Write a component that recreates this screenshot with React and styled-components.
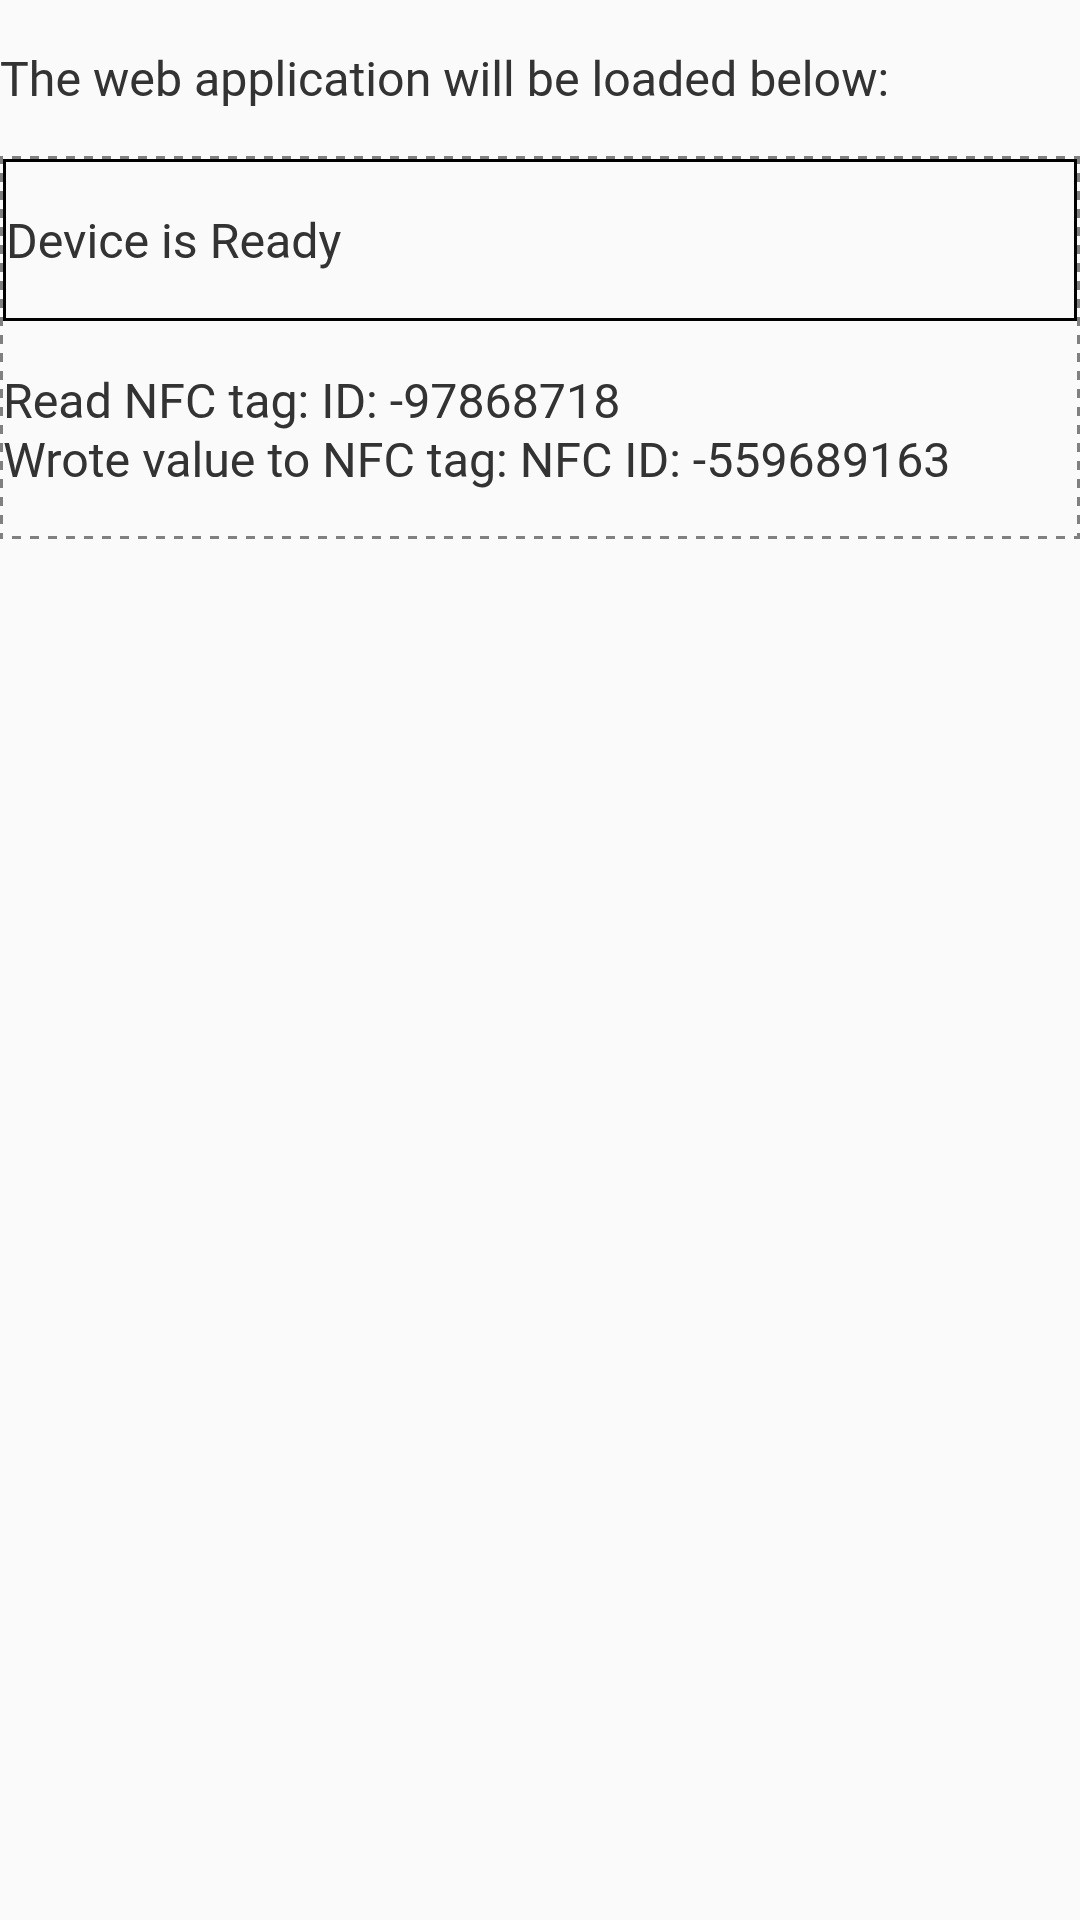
import React from 'react';
import styled, { createGlobalStyle } from 'styled-components';

const GlobalStyle = createGlobalStyle`
  html, body {
    margin: 0;
    padding: 0;
    background: #fafafa;
  }
  body {
    font-family: Roboto, "Noto Sans", sans-serif;
    color: #333333;
    font-size: 48.3px;
    line-height: 59px;
  }
`;

const dash = '#808080';

// dashed frame drawn with gradients so the dashes are 9px long like the webview's
const AppFrame = styled.div`
  padding: 3px;
  background:
    repeating-linear-gradient(90deg, ${dash} 0 3px, transparent 3px 12px, ${dash} 12px 18px) top left / 100% 3px no-repeat,
    repeating-linear-gradient(90deg, ${dash} 0 3px, transparent 3px 12px, ${dash} 12px 18px) bottom left / 100% 3px no-repeat,
    repeating-linear-gradient(180deg, ${dash} 0 8px, transparent 8px 17px, ${dash} 17px 18px) top left / 3px 100% no-repeat,
    repeating-linear-gradient(180deg, ${dash} 0 8px, transparent 8px 17px, ${dash} 17px 18px) top right / 3px 100% no-repeat;
`;

const Intro = styled.p`
  margin: 50px 0 47px;
`;

const StatusBox = styled.div`
  border: 3px solid #000000;
  padding: 50px 0 47px;
`;

const Log = styled.div`
  padding: 51px 0 46px;
`;

const LogLine = styled.div`
  white-space: nowrap;
`;

export default function App() {
  const messages = [
    'Read NFC tag: ID: -97868718',
    'Wrote value to NFC tag: NFC ID: -559689163',
  ];

  return (
    <>
      <GlobalStyle />
      <Intro>The web application will be loaded below:</Intro>
      <AppFrame>
        <StatusBox>Device is Ready</StatusBox>
        <Log>
          {messages.map((m) => (
            <LogLine key={m}>{m}</LogLine>
          ))}
        </Log>
      </AppFrame>
    </>
  );
}
